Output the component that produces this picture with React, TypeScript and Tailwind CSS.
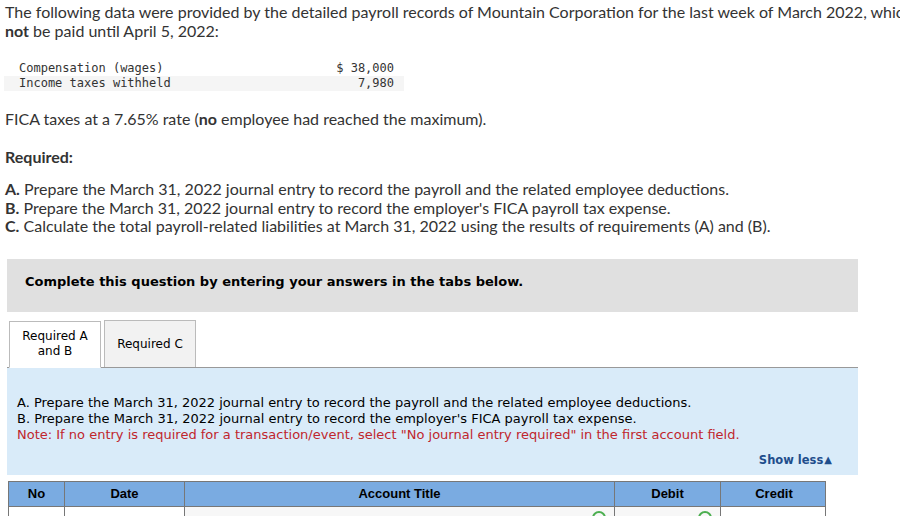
import React from "react";

const body = { fontFamily: "Lato, 'Open Sans', sans-serif" };
const verd = { fontFamily: "'DejaVu Sans', Verdana, sans-serif" };

export default function App() {
  return (
    <div className="w-[900px] h-[516px] overflow-hidden bg-white text-[#333]">
      <div className="pl-[5px] pt-[2px] text-[16px] leading-[19px] whitespace-nowrap" style={body}>
        <div>The following data were provided by the detailed payroll records of Mountain Corporation for the last week of March 2022, which will</div>
        <div><b className="font-bold">not</b> be paid until April 5, 2022:</div>
      </div>

      <div className="mt-[21px] ml-[4px] w-[400px] text-[12px] leading-[15px] text-[#333]" style={{ fontFamily: "'DejaVu Sans Mono', 'Liberation Mono', monospace" }}>
        <div className="flex justify-between pl-[15px] pr-[10px]">
          <span>Compensation (wages)</span>
          <span>$ 38,000</span>
        </div>
        <div className="flex justify-between pl-[15px] pr-[10px] bg-[#f5f5f5]">
          <span>Income taxes withheld</span>
          <span>7,980</span>
        </div>
      </div>

      <div className="pl-[5px] mt-[18px] text-[16px] leading-[19px]" style={body}>
        FICA taxes at a 7.65% rate (<b className="font-bold">no</b> employee had reached the maximum).
      </div>

      <div className="pl-[5px] mt-[19px] text-[16px] leading-[19px] font-bold" style={body}>Required:</div>

      <div className="pl-[5px] mt-[14px] text-[16px] leading-[18.5px]" style={body}>
        <div><b className="font-bold">A.</b> Prepare the March 31, 2022 journal entry to record the payroll and the related employee deductions.</div>
        <div><b className="font-bold">B.</b> Prepare the March 31, 2022 journal entry to record the employer's FICA payroll tax expense.</div>
        <div><b className="font-bold">C.</b> Calculate the total payroll-related liabilities at March 31, 2022 using the results of requirements (A) and (B).</div>
      </div>

      <div className="ml-[7px] w-[851px] mt-[23px]">
        <div className="h-[53px] bg-[#e0e0e0] flex items-center pl-[18px] pb-[6px] text-[13px] font-bold text-black" style={verd}>
          Complete this question by entering your answers in the tabs below.
        </div>

        <div className="mt-[8px] flex items-end gap-[3px] border-b border-[#999] pl-[2px]">
          <div className="w-[92px] h-[47px] -mb-px bg-white border border-[#bbb] border-b-white flex items-center justify-center text-center text-[12px] leading-[15px] text-black" style={verd}>
            Required A<br />and B
          </div>
          <div className="w-[92px] h-[47px] bg-[#f2f2f2] border border-[#bbb] border-b-0 flex items-center justify-center text-[12px] text-black" style={verd}>
            Required C
          </div>
        </div>

        <div className="h-[107px] bg-[#d9ebf9] pl-[10px] pr-[26px] pt-[27px] text-[13px] leading-[16px] text-black" style={verd}>
          <div>A. Prepare the March 31, 2022 journal entry to record the payroll and the related employee deductions.</div>
          <div>B. Prepare the March 31, 2022 journal entry to record the employer's FICA payroll tax expense.</div>
          <div className="text-[#c0262d]">Note: If no entry is required for a transaction/event, select "No journal entry required" in the first account field.</div>
          <div className="mt-[9px] flex justify-end items-center text-[11.5px] font-bold text-[#1f4e8c]">
            Show less<span className="text-[10px] ml-[1px]">▲</span>
          </div>
        </div>
      </div>

      <div className="ml-[8px] mt-[6px] w-[818px]" style={{ fontFamily: "'Liberation Sans', Arial, sans-serif" }}>
        <div className="grid grid-cols-[55px_120px_430px_106px_107px] h-[26px] bg-[#7aabe1] border border-[#777] text-[13px] font-bold text-black">
          <div className="flex items-center justify-center">No</div>
          <div className="flex items-center justify-center border-l border-[#777]">Date</div>
          <div className="flex items-center justify-center border-l border-[#777]">Account Title</div>
          <div className="flex items-center justify-center border-l border-[#777]">Debit</div>
          <div className="flex items-center justify-center border-l border-[#777]">Credit</div>
        </div>
        <div className="grid grid-cols-[55px_120px_430px_106px_107px] h-[20px] border-l border-r border-[#777]">
          <div />
          <div className="border-l border-[#777]" />
          <div className="border-l border-[#777] bg-[#f7f7f7] relative">
            <span className="absolute right-[8px] top-[4px] w-[14px] h-[14px] rounded-full border-2 border-[#4caf50]" />
          </div>
          <div className="border-l border-[#777] bg-[#f7f7f7] relative">
            <span className="absolute right-[8px] top-[4px] w-[14px] h-[14px] rounded-full border-2 border-[#4caf50]" />
          </div>
          <div className="border-l border-[#777]" />
        </div>
      </div>
    </div>
  );
}
